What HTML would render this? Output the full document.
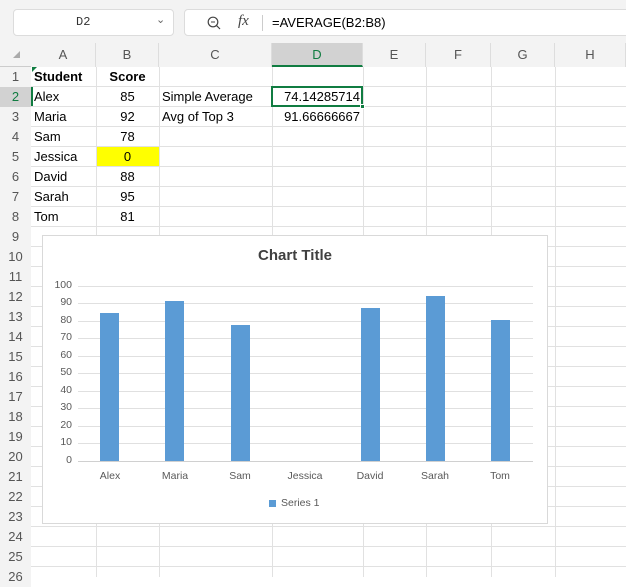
<!DOCTYPE html>
<html><head><meta charset="utf-8"><style>
*{margin:0;padding:0;box-sizing:border-box}
body{width:626px;height:577px;overflow:hidden;background:#fff;font-family:"Liberation Sans",sans-serif;position:relative;font-size:13px;color:#000}
.a{position:absolute}
.top{left:0;top:0;width:626px;height:43px;background:#f3f3f3}
.box{background:#fff;border:1px solid #dcdcdc;border-radius:4px;height:27px;top:9px}
.ch{top:43px;height:24px;background:#f3f3f3;color:#555;font-size:13px;text-align:center;line-height:24px;border-right:1px solid #ddd}
.rh{left:0;width:31px;background:#f3f3f3;color:#555;text-align:center;height:20px;line-height:20px;font-size:13px}
.vl{top:67px;width:1px;height:510px;background:#e1e1e1}
.hl{left:31px;width:595px;height:1px;background:#e1e1e1}
.t{height:20px;line-height:20px;font-size:13px}
.gl{left:78px;width:455px;height:1px;background:#e0e0e0}
.bar{background:#5b9bd5;width:19px}
.lab{font-size:10.5px;color:#595959;width:60px;text-align:center}
.yl{font-size:10.5px;color:#595959;width:30px;text-align:right;left:42px}
</style></head><body>
<div class="a top"></div>
<div class="a box" style="left:13px;width:161px"><span class="a" style="left:62px;top:5px;font-size:12px;color:#333;font-family:'Liberation Mono',monospace">D2</span><span class="a" style="left:142px;top:3px;color:#666;font-size:11px">&#8964;</span></div>
<div class="a box" style="left:184px;width:450px">
<svg class="a" style="left:22px;top:6px" width="14" height="14" viewBox="0 0 14 14"><circle cx="6" cy="6" r="4.8" fill="none" stroke="#444" stroke-width="1.2"/><line x1="9.5" y1="9.5" x2="13" y2="13" stroke="#444" stroke-width="1.2"/><line x1="4" y1="6" x2="8" y2="6" stroke="#444"/></svg>
<span class="a" style="left:53px;top:3px;font-family:'Liberation Serif',serif;font-style:italic;font-size:15px;color:#444">fx</span>
<div class="a" style="left:77px;top:5px;width:1px;height:16px;background:#ccc"></div>
<span class="a" style="left:87px;top:5px;font-size:13px;color:#000">=AVERAGE(B2:B8)</span></div>
<div class="a" style="left:0;top:43px;width:626px;height:24px;background:#f3f3f3;border-bottom:1px solid #ccc"></div>
<div class="a" style="left:0;top:67px;width:31px;height:510px;background:#f3f3f3;border-right:1px solid #ccc"></div>
<div class="a ch" style="left:31px;width:65px">A</div>
<div class="a ch" style="left:96px;width:63px">B</div>
<div class="a ch" style="left:159px;width:113px">C</div>
<div class="a ch" style="left:272px;width:91px;background:#d2d2d2;color:#107c41;border-bottom:2px solid #107c41">D</div>
<div class="a ch" style="left:363px;width:63px">E</div>
<div class="a ch" style="left:426px;width:65px">F</div>
<div class="a ch" style="left:491px;width:64px">G</div>
<div class="a ch" style="left:555px;width:71px">H</div>
<svg class="a" style="left:13px;top:51px" width="8" height="8"><polygon points="7,0 7,7 0,7" fill="#aaa"/></svg>
<div class="a vl" style="left:96px"></div><div class="a vl" style="left:159px"></div><div class="a vl" style="left:272px"></div><div class="a vl" style="left:363px"></div><div class="a vl" style="left:426px"></div><div class="a vl" style="left:491px"></div><div class="a vl" style="left:555px"></div>
<div id="rows"></div>
<script></script>
<div class="a hl" style="top:86px"></div><div class="a hl" style="top:106px"></div><div class="a hl" style="top:126px"></div><div class="a hl" style="top:146px"></div><div class="a hl" style="top:166px"></div><div class="a hl" style="top:186px"></div><div class="a hl" style="top:206px"></div><div class="a hl" style="top:226px"></div><div class="a hl" style="top:246px"></div><div class="a hl" style="top:266px"></div><div class="a hl" style="top:286px"></div><div class="a hl" style="top:306px"></div><div class="a hl" style="top:326px"></div><div class="a hl" style="top:346px"></div><div class="a hl" style="top:366px"></div><div class="a hl" style="top:386px"></div><div class="a hl" style="top:406px"></div><div class="a hl" style="top:426px"></div><div class="a hl" style="top:446px"></div><div class="a hl" style="top:466px"></div><div class="a hl" style="top:486px"></div><div class="a hl" style="top:506px"></div><div class="a hl" style="top:526px"></div><div class="a hl" style="top:546px"></div><div class="a hl" style="top:566px"></div>
<div class="a rh" style="top:67px">1</div><div class="a rh" style="top:87px;background:#d2d2d2;color:#107c41">2</div><div class="a rh" style="top:107px">3</div><div class="a rh" style="top:127px">4</div><div class="a rh" style="top:147px">5</div><div class="a rh" style="top:167px">6</div><div class="a rh" style="top:187px">7</div><div class="a rh" style="top:207px">8</div><div class="a rh" style="top:227px">9</div><div class="a rh" style="top:247px">10</div><div class="a rh" style="top:267px">11</div><div class="a rh" style="top:287px">12</div><div class="a rh" style="top:307px">13</div><div class="a rh" style="top:327px">14</div><div class="a rh" style="top:347px">15</div><div class="a rh" style="top:367px">16</div><div class="a rh" style="top:387px">17</div><div class="a rh" style="top:407px">18</div><div class="a rh" style="top:427px">19</div><div class="a rh" style="top:447px">20</div><div class="a rh" style="top:467px">21</div><div class="a rh" style="top:487px">22</div><div class="a rh" style="top:507px">23</div><div class="a rh" style="top:527px">24</div><div class="a rh" style="top:547px">25</div><div class="a rh" style="top:567px">26</div>
<div class="a" style="left:31px;top:87px;width:2px;height:19px;background:#107c41"></div>
<div class="a" style="left:97px;top:147px;width:62px;height:19px;background:#ffff00"></div>
<svg class="a" style="left:32px;top:67px" width="5" height="5"><polygon points="0,0 5,0 0,5" fill="#107c41"/></svg>
<div class="a t" style="left:34px;top:67px;font-weight:bold">Student</div>
<div class="a t" style="left:96px;top:67px;width:63px;text-align:center;font-weight:bold">Score</div>
<div class="a t" style="left:34px;top:87px">Alex</div><div class="a t" style="left:34px;top:107px">Maria</div><div class="a t" style="left:34px;top:127px">Sam</div><div class="a t" style="left:34px;top:147px">Jessica</div><div class="a t" style="left:34px;top:167px">David</div><div class="a t" style="left:34px;top:187px">Sarah</div><div class="a t" style="left:34px;top:207px">Tom</div>
<div class="a t" style="left:96px;top:87px;width:63px;text-align:center">85</div><div class="a t" style="left:96px;top:107px;width:63px;text-align:center">92</div><div class="a t" style="left:96px;top:127px;width:63px;text-align:center">78</div><div class="a t" style="left:96px;top:147px;width:63px;text-align:center">0</div><div class="a t" style="left:96px;top:167px;width:63px;text-align:center">88</div><div class="a t" style="left:96px;top:187px;width:63px;text-align:center">95</div><div class="a t" style="left:96px;top:207px;width:63px;text-align:center">81</div>
<div class="a t" style="left:162px;top:87px">Simple Average</div>
<div class="a t" style="left:162px;top:107px">Avg of Top 3</div>
<div class="a t" style="left:272px;top:87px;width:88px;text-align:right">74.14285714</div>
<div class="a t" style="left:272px;top:107px;width:88px;text-align:right">91.66666667</div>
<div class="a" style="left:271px;top:86px;width:92px;height:21px;border:2px solid #107c41"></div>
<div class="a" style="left:360px;top:104px;width:5px;height:5px;background:#107c41;border:1px solid #fff"></div>
<div class="a" style="left:42px;top:235px;width:506px;height:289px;background:#fff;border:1px solid #d9d9d9"></div>
<div class="a" style="left:42px;top:247px;width:506px;text-align:center;font-size:15px;font-weight:bold;color:#404040">Chart Title</div>
<div class="a gl" style="top:286px"></div><div class="a gl" style="top:303px"></div><div class="a gl" style="top:321px"></div><div class="a gl" style="top:338px"></div><div class="a gl" style="top:356px"></div><div class="a gl" style="top:373px"></div><div class="a gl" style="top:391px"></div><div class="a gl" style="top:408px"></div><div class="a gl" style="top:426px"></div><div class="a gl" style="top:443px"></div><div class="a gl" style="top:461px;background:#d0d0d0"></div>
<div class="a yl" style="top:279px">100</div><div class="a yl" style="top:296px">90</div><div class="a yl" style="top:314px">80</div><div class="a yl" style="top:331px">70</div><div class="a yl" style="top:349px">60</div><div class="a yl" style="top:366px">50</div><div class="a yl" style="top:384px">40</div><div class="a yl" style="top:401px">30</div><div class="a yl" style="top:419px">20</div><div class="a yl" style="top:436px">10</div><div class="a yl" style="top:454px">0</div>
<div class="a bar" style="left:100px;top:313px;height:148px"></div>
<div class="a bar" style="left:165px;top:301px;height:160px"></div>
<div class="a bar" style="left:231px;top:325px;height:136px"></div>
<div class="a bar" style="left:361px;top:308px;height:153px"></div>
<div class="a bar" style="left:426px;top:296px;height:165px"></div>
<div class="a bar" style="left:491px;top:320px;height:141px"></div>
<div class="a lab" style="left:80px;top:470px">Alex</div><div class="a lab" style="left:145px;top:470px">Maria</div><div class="a lab" style="left:210px;top:470px">Sam</div><div class="a lab" style="left:275px;top:470px">Jessica</div><div class="a lab" style="left:340px;top:470px">David</div><div class="a lab" style="left:405px;top:470px">Sarah</div><div class="a lab" style="left:470px;top:470px">Tom</div>
<div class="a" style="left:269px;top:500px;width:7px;height:7px;background:#5b9bd5"></div>
<div class="a" style="left:281px;top:497px;font-size:10.5px;color:#595959">Series 1</div>
</body></html>
